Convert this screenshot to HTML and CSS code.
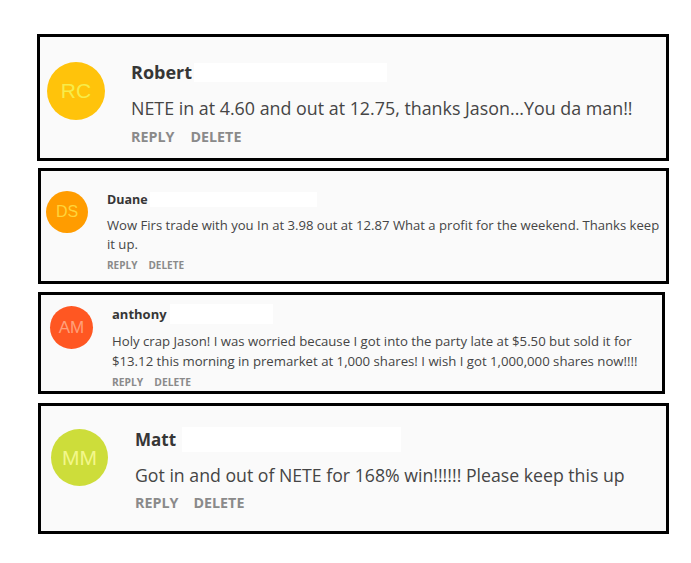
FILE: index.html
```html
<!DOCTYPE html>
<html lang="en">
<head>
<meta charset="utf-8">
<title>Comments</title>
<link rel="stylesheet" href="styles.css">
</head>
<body>
<div class="list">
  <div class="card c1">
    <div class="avatar av-rc">RC</div>
    <div class="body">
      <div class="name">Robert<span class="mask"></span></div>
      <p class="text">NETE in at 4.60 and out at 12.75, thanks Jason...You da man!!</p>
      <div class="actions"><span>REPLY</span><span>DELETE</span></div>
    </div>
  </div>
  <div class="card c2">
    <div class="avatar av-ds">DS</div>
    <div class="body">
      <div class="name">Duane<span class="mask"></span></div>
      <p class="text">Wow Firs trade with you In at 3.98 out at 12.87 What a profit for the weekend. Thanks keep it up.</p>
      <div class="actions"><span>REPLY</span><span>DELETE</span></div>
    </div>
  </div>
  <div class="card c3">
    <div class="avatar av-am">AM</div>
    <div class="body">
      <div class="name">anthony<span class="mask"></span></div>
      <p class="text">Holy crap Jason! I was worried because I got into the party late at $5.50 but sold it for $13.12 this morning in premarket at 1,000 shares! I wish I got 1,000,000 shares now!!!!</p>
      <div class="actions"><span>REPLY</span><span>DELETE</span></div>
    </div>
  </div>
  <div class="card c4">
    <div class="avatar av-mm">MM</div>
    <div class="body">
      <div class="name">Matt<span class="mask"></span></div>
      <p class="text">Got in and out of NETE for 168% win!!!!!! Please keep this up</p>
      <div class="actions"><span>REPLY</span><span>DELETE</span></div>
    </div>
  </div>
</div>
</body>
</html>
```
FILE: styles.css
```css
html, body {
  margin: 0;
  padding: 0;
  background: #ffffff;
}

.list {
  display: flex;
  flex-direction: column;
  align-items: flex-start;
  padding: 34px 0 0 37px;
}

.card {
  box-sizing: border-box;
  border: 3px solid #000;
  background: #fafafa;
  display: flex;
  align-items: flex-start;
  font-family: "Open Sans", "Liberation Sans", sans-serif;
}

.avatar {
  flex: none;
  border-radius: 50%;
  display: flex;
  align-items: center;
  justify-content: center;
  font-family: "Liberation Sans", Arial, sans-serif;
  font-weight: 400;
}

.av-rc { background: #ffc30b; color: #f7ec4a; }
.av-ds { background: #ff9c00; color: #ffd43a; }
.av-am { background: #ff5722; color: #ffa07a; }
.av-mm { background: #cddd3a; color: #f3f78a; }

.body {
  min-width: 0;
}

.name {
  font-weight: 700;
  color: #363636;
  display: flex;
  align-items: center;
}

.mask {
  display: inline-block;
  background: #ffffff;
}

.text {
  margin: 0;
  color: #454545;
}

.actions {
  display: flex;
  font-weight: 700;
  color: #8a8a8a;
}

/* card 1 */
.c1 { width: 632px; height: 127px; padding: 23px 0 0 7px; }
.c1 .avatar { width: 58px; height: 58px; margin-top: 2px; margin-right: 26px; font-size: 21px; }
.c1 .name { font-size: 18px; line-height: 24px; }
.c1 .mask { width: 193px; height: 19px; margin-left: 2px; }
.c1 .text { font-size: 17.85px; line-height: 24px; margin-top: 12px; }
.c1 .actions { font-size: 14.3px; line-height: 20px; margin-top: 7px; gap: 16px; }

/* card 2 */
.c2 { width: 631px; height: 116px; margin: 7px 0 0 1px; padding: 20px 0 0 5px; }
.c2 .avatar { width: 42px; height: 42px; margin-right: 19px; font-size: 16px; }
.c2 .name { font-size: 12.5px; line-height: 17px; }
.c2 .mask { width: 167px; height: 15px; margin-left: 2px; }
.c2 .text { font-size: 13.1px; line-height: 18.5px; margin-top: 8px; }
.c2 .actions { font-size: 10px; line-height: 14px; margin-top: 5px; gap: 11px; }

/* card 3 */
.c3 { width: 627px; height: 102px; margin: 8px 0 0 1px; padding: 9px 0 0 9px; }
.c3 .avatar { width: 43px; height: 43px; margin-top: 2px; margin-right: 19px; font-size: 17px; }
.c3 .name { font-size: 13px; line-height: 18px; }
.c3 .mask { width: 103px; height: 20px; margin-left: 3px; }
.c3 .text { font-size: 13.2px; line-height: 19.5px; margin-top: 8px; }
.c3 .actions { font-size: 10.3px; line-height: 14px; margin-top: 4px; gap: 11px; }

/* card 4 */
.c4 { width: 631px; height: 131px; margin: 9px 0 0 1px; padding: 21px 0 0 10px; }
.c4 .avatar { width: 57px; height: 57px; margin-top: 2px; margin-right: 27px; font-size: 21px; }
.c4 .name { font-size: 17px; line-height: 23px; }
.c4 .mask { width: 219px; height: 25px; margin-left: 6px; }
.c4 .text { font-size: 17.7px; line-height: 23px; margin-top: 12px; }
.c4 .actions { font-size: 14.3px; line-height: 20px; margin-top: 6px; gap: 15px; }
```
